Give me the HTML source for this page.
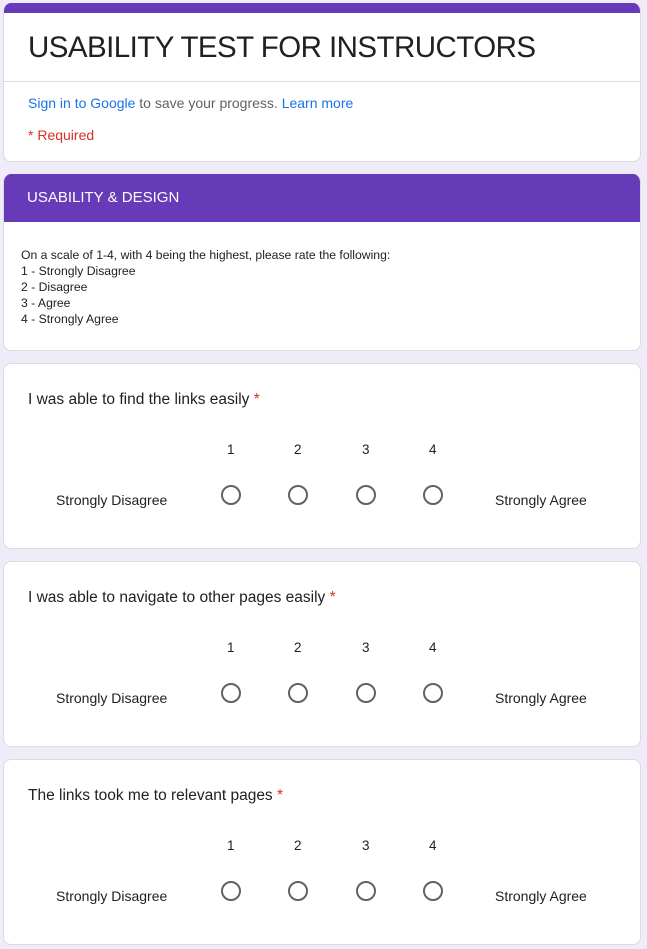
<!DOCTYPE html>
<html><head><style>
body{margin:0;background:#f0ebf8;font-family:"Liberation Sans",sans-serif;width:647px;height:949px;overflow:hidden;position:relative}
.card{position:absolute;left:3px;width:638px;background:#fff;border:1px solid #dadce0;border-radius:8px;box-sizing:border-box;overflow:hidden}
.abs{position:absolute;white-space:nowrap}
.r{position:absolute;width:16px;height:16px;border:2px solid #5f6368;border-radius:50%}
.q{left:24px;top:27px;font-size:15.5px;color:#202124}
</style></head><body>
<div class="card" style="top:3px;height:159px;border-top:none">
 <div style="height:10px;background:#673ab7"></div>
 <div class="abs" style="left:24px;top:28px;font-size:29.5px;color:#202124;letter-spacing:-0.55px">USABILITY TEST FOR INSTRUCTORS</div>
 <div style="position:absolute;left:0;right:0;top:78px;border-top:1px solid #dadce0"></div>
 <div class="abs" style="left:24px;top:92px;font-size:14px;color:#5f6368"><span style="color:#1a73e8">Sign in to Google</span> to save your progress. <span style="color:#1a73e8">Learn more</span></div>
 <div class="abs" style="left:24px;top:124px;font-size:14px;color:#d93025">* Required</div>
</div>
<div class="card" style="top:174px;height:177px;border-top:none">
 <div style="height:48px;background:#673ab7;color:#fff;font-size:15px;line-height:48px;padding-left:23px">USABILITY &amp; DESIGN</div>
 <div class="abs" style="left:17px;top:73px;font-size:12.2px;line-height:16px;color:#202124">On a scale of 1-4, with 4 being the highest, please rate the following:<br>1 - Strongly Disagree<br>2 - Disagree<br>3 - Agree<br>4 - Strongly Agree</div>
</div>

<div class="card" style="top:363px;height:186px">
 <div class="abs q">I was able to find the links easily <span style="color:#d93025">*</span></div>
 <div class="abs" style="left:223px;top:78px;font-size:13.5px;color:#202124">1</div><div class="abs" style="left:290px;top:78px;font-size:13.5px;color:#202124">2</div><div class="abs" style="left:358px;top:78px;font-size:13.5px;color:#202124">3</div><div class="abs" style="left:425px;top:78px;font-size:13.5px;color:#202124">4</div>
 <div class="r" style="left:217px;top:121px"></div><div class="r" style="left:284px;top:121px"></div><div class="r" style="left:352px;top:121px"></div><div class="r" style="left:419px;top:121px"></div>
 <div class="abs" style="left:52px;top:128px;font-size:14px;color:#202124">Strongly Disagree</div>
 <div class="abs" style="left:491px;top:128px;font-size:14px;color:#202124">Strongly Agree</div>
</div>

<div class="card" style="top:561px;height:186px">
 <div class="abs q">I was able to navigate to other pages easily <span style="color:#d93025">*</span></div>
 <div class="abs" style="left:223px;top:78px;font-size:13.5px;color:#202124">1</div><div class="abs" style="left:290px;top:78px;font-size:13.5px;color:#202124">2</div><div class="abs" style="left:358px;top:78px;font-size:13.5px;color:#202124">3</div><div class="abs" style="left:425px;top:78px;font-size:13.5px;color:#202124">4</div>
 <div class="r" style="left:217px;top:121px"></div><div class="r" style="left:284px;top:121px"></div><div class="r" style="left:352px;top:121px"></div><div class="r" style="left:419px;top:121px"></div>
 <div class="abs" style="left:52px;top:128px;font-size:14px;color:#202124">Strongly Disagree</div>
 <div class="abs" style="left:491px;top:128px;font-size:14px;color:#202124">Strongly Agree</div>
</div>

<div class="card" style="top:759px;height:186px">
 <div class="abs q">The links took me to relevant pages <span style="color:#d93025">*</span></div>
 <div class="abs" style="left:223px;top:78px;font-size:13.5px;color:#202124">1</div><div class="abs" style="left:290px;top:78px;font-size:13.5px;color:#202124">2</div><div class="abs" style="left:358px;top:78px;font-size:13.5px;color:#202124">3</div><div class="abs" style="left:425px;top:78px;font-size:13.5px;color:#202124">4</div>
 <div class="r" style="left:217px;top:121px"></div><div class="r" style="left:284px;top:121px"></div><div class="r" style="left:352px;top:121px"></div><div class="r" style="left:419px;top:121px"></div>
 <div class="abs" style="left:52px;top:128px;font-size:14px;color:#202124">Strongly Disagree</div>
 <div class="abs" style="left:491px;top:128px;font-size:14px;color:#202124">Strongly Agree</div>
</div>
</body></html>
